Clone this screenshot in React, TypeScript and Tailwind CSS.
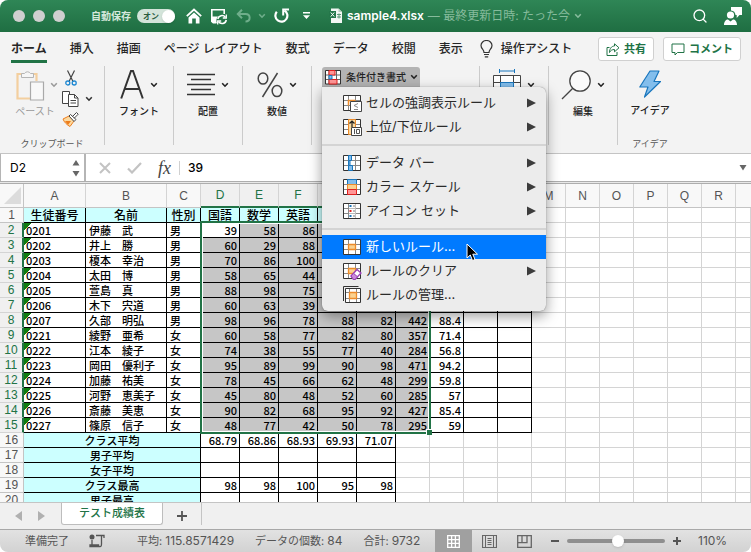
import type { ReactNode } from 'react';
import clsx from 'clsx';
import { Search } from 'lucide-react';

type Student = {
  id: string;
  name: string;
  sex: string;
  scores: string[];
};

const COLUMNS = 'ABCDEFGHIJKLMNOPQR'.split('');

const STUDENTS: Student[] = [
  { id: '0201', name: '伊藤　武', sex: '男', scores: ['39', '58', '86'] },
  { id: '0202', name: '井上　勝', sex: '男', scores: ['60', '29', '88'] },
  { id: '0203', name: '榎本　幸治', sex: '男', scores: ['70', '86', '100'] },
  { id: '0204', name: '太田　博', sex: '男', scores: ['58', '65', '44'] },
  { id: '0205', name: '萱島　真', sex: '男', scores: ['88', '98', '75'] },
  { id: '0206', name: '木下　宍道', sex: '男', scores: ['60', '63', '39'] },
  { id: '0207', name: '久部　明弘', sex: '男', scores: ['98', '96', '78', '88', '82', '442', '88.4'] },
  { id: '0221', name: '綾野　亜希', sex: '女', scores: ['60', '58', '77', '82', '80', '357', '71.4'] },
  { id: '0222', name: '江本　綾子', sex: '女', scores: ['74', '38', '55', '77', '40', '284', '56.8'] },
  { id: '0223', name: '岡田　優利子', sex: '女', scores: ['95', '89', '99', '90', '98', '471', '94.2'] },
  { id: '0224', name: '加藤　祐美', sex: '女', scores: ['78', '45', '66', '62', '48', '299', '59.8'] },
  { id: '0225', name: '河野　恵美子', sex: '女', scores: ['45', '80', '48', '52', '60', '285', '57'] },
  { id: '0226', name: '斎藤　美恵', sex: '女', scores: ['90', '82', '68', '95', '92', '427', '85.4'] },
  { id: '0227', name: '篠原　信子', sex: '女', scores: ['48', '77', '42', '50', '78', '295', '59'] },
];

const SUMMARY = [
  { label: 'クラス平均', values: ['68.79', '68.86', '68.93', '69.93', '71.07'] },
  { label: '男子平均', values: ['', '', '', '', ''] },
  { label: '女子平均', values: ['', '', '', '', ''] },
  { label: 'クラス最高', values: ['98', '98', '100', '95', '98'] },
  { label: '男子最高', values: ['', '', '', '', ''] },
];

const TABS = ['ホーム', '挿入', '描画', 'ページ レイアウト', '数式', 'データ', '校閲', '表示'];

function Chevron({ className }: { className?: string }) {
  return (
    <svg width="8" height="6" viewBox="0 0 8 6" fill="none" stroke="currentColor" strokeWidth="1.6" className={className}>
      <path d="M1.2 1.2 4 4.2 6.8 1.2" />
    </svg>
  );
}

function TitleBar() {
  return (
    <header className="flex h-8 shrink-0 items-center bg-linear-to-b from-[#2f8656] to-[#1f6e42] px-[13px] text-white">
      <div className="flex gap-2">
        <span className="size-3 rounded-full bg-[#cfcfcf]" />
        <span className="size-3 rounded-full bg-[#cfcfcf]" />
        <span className="size-3 rounded-full bg-[#cfcfcf]" />
      </div>
      <span className="ml-[26px] text-[10px] font-bold text-[#d5e8dc]">自動保存</span>
      <button type="button" aria-label="自動保存" className="ml-1.5 flex h-3.5 w-[38px] items-center justify-between rounded-full bg-[#d3e4da] pl-1.5 text-[8px] font-bold text-[#2a5c40]">
        オン
        <span className="size-[13px] rounded-full bg-white shadow" />
      </button>
      <button type="button" aria-label="ホーム" className="ml-[11px]">
        <svg width="16" height="16" viewBox="0 0 16 16" fill="none">
          <path d="M.8 8.2 8 1.500l7.200 6.700" stroke="#fff" strokeWidth="1.8" />
          <path d="M2.500 9.500 8 4.500l5.500 5v6H9.800v-5H6.200v5H2.500z" fill="#fff" />
        </svg>
      </button>
      <button type="button" aria-label="保存" className="ml-2">
        <svg width="18" height="17" viewBox="0 0 18 17" fill="none">
          <path d="M14.200 6V1.800H1.800v11.500l1.500 1.400h3.200" stroke="#fff" strokeWidth="1.600" />
          <path d="M1.500 8.500h6.500L6.500 11v4H3.300L1.500 13.300z" fill="#fff" />
          <path d="M7.800 11a4.300 4.300 0 0 1 7.600-1.800M16.300 12a4.300 4.300 0 0 1-7.700 1.800" stroke="#fff" strokeWidth="1.500" />
          <path d="M16.300 6.500v3.500h-3.500M7.700 16.500V13h3.500" stroke="#fff" strokeWidth="1.300" />
        </svg>
      </button>
      <button type="button" aria-label="元に戻す" className="ml-2 flex items-center gap-1.5 text-[#6fae8b]">
        <svg width="16" height="14" viewBox="0 0 16 14" fill="none" stroke="currentColor" strokeWidth="2">
          <path d="M6 .800 1.800 5 6 9.200M2 5h7.500c5.500 0 5.500 7.500 0 7.500" />
        </svg>
        <Chevron />
      </button>
      <button type="button" aria-label="繰り返す" className="ml-2">
        <svg width="16" height="16" viewBox="0 0 16 16" fill="none" stroke="#fff" strokeWidth="2.200">
          <path d="M2.800 3.800a6 6 0 1 0 7.600-1.300" />
          <path d="M15 1.500H9.200v6" strokeWidth="2" />
        </svg>
      </button>
      <button type="button" aria-label="ツールバーのカスタマイズ" className="ml-3">
        <svg width="9" height="8" viewBox="0 0 9 8" fill="#fff">
          <path d="M1 0h7v1.500H1zM1 3.200h7L4.500 7z" />
        </svg>
      </button>
      <svg width="14" height="16" viewBox="0 0 14 16" className="ml-[18px]">
        <path d="M2 .500h7.500l3.500 3.500v11H2z" fill="#f3f7f4" />
        <path d="M9.500.500V4H13" fill="#b5cfc0" />
        <rect y="3" width="7" height="7" fill="#24774a" />
        <path d="m1.800 4.500 3.400 4M5.200 4.500l-3.400 4" stroke="#fff" />
        <path d="M8 6.500h4M8 9h4M10 5.500v5" stroke="#5b9777" />
      </svg>
      <h1 className="ml-1 flex min-w-0 items-center gap-1 text-xs whitespace-nowrap">
        <span className="font-semibold">sample4.xlsx</span>
        <span className="text-[#86bb9c]">— 最終更新日時: たった今</span>
        <Chevron className="text-[#86bb9c]" />
      </h1>
      <button type="button" aria-label="検索" className="ml-auto">
        <Search size={16} strokeWidth={2} />
      </button>
      <button type="button" aria-label="アカウント" className="ml-4 -mr-1">
        <svg width="18" height="18" viewBox="0 0 18 18" fill="#fff">
          <path d="M7 0h11v8h-2.500l-2.800 3V8H11.500A5 5 0 0 0 7 3.500z" />
          <circle cx="6.500" cy="8" r="3.600" />
          <path d="M0 18c0-3.500 2-5.500 4-5.500l2.500 2 2.500-2c2 0 4 2 4 5.500z" />
        </svg>
      </button>
    </header>
  );
}

function TabStrip() {
  return (
    <nav className="flex h-[34px] shrink-0 items-center pr-2.5 pl-[11px] text-xs font-medium whitespace-nowrap text-[#262626]">
      <div className="flex gap-[23px]">
        {TABS.map((tab, i) => (
          <button
            key={tab}
            type="button"
            className={clsx('h-7 border-b-[3px] pt-0.5', i === 0 ? 'border-[#217346] font-bold' : 'border-transparent')}
          >
            {tab}
          </button>
        ))}
      </div>
      <button type="button" className="ml-[17px] flex items-center gap-2">
        <svg width="13" height="18" viewBox="0 0 13 18" fill="none" stroke="#333" strokeWidth="1.200">
          <path d="M4 12.500c0-3-3-3.600-3-7a5.500 5 0 0 1 11 0c0 3.400-3 4-3 7zM4 14.500h5M4.800 16.800h3.400" />
        </svg>
        操作アシスト
      </button>
      <div className="ml-auto flex gap-[9px] font-bold text-[#217346]">
        <button type="button" className="flex h-6 items-center gap-1 rounded-[3px] border border-[#d0d0d0] bg-white px-[7px] text-[11px]">
          <svg width="14" height="13" viewBox="0 0 14 13" fill="none" stroke="currentColor">
            <path d="M3.500 4.500H1v8h10V9M8.500.800l4.500 4-4.500 4v-2.300C6 6.500 4.500 7.500 3.500 9.500c0-4 2-6.400 5-6.500z" />
          </svg>
          共有
        </button>
        <button type="button" className="flex h-6 items-center gap-1 rounded-[3px] border border-[#d0d0d0] bg-white px-[7px] text-[11px]">
          <svg width="14" height="13" viewBox="0 0 14 13" fill="none" stroke="currentColor">
            <path d="M1 1h12v8.500H6.500L4 12V9.500H1z" />
          </svg>
          コメント
        </button>
      </div>
    </nav>
  );
}

function Divider() {
  return <div className="h-[79px] w-px shrink-0 bg-[#cbcbcb]" />;
}

function RibbonGroup({ label, children }: { label: string; children: ReactNode }) {
  return (
    <section className="w-[68px] shrink-0">
      <button type="button" className="flex w-full flex-col items-center text-[10px] font-medium text-[#222]">
        <span className="flex h-[37px] w-full items-center justify-center gap-1.5">
          {children}
          <Chevron />
        </span>
        <span className="leading-4">{label}</span>
      </button>
    </section>
  );
}

// Small 3x3 table that every rule icon is built on
function GridIcon({ children }: { children?: ReactNode }) {
  return (
    <svg width="19" height="18" viewBox="0 0 19 18" fill="none" className="shrink-0">
      <path d="M.5 1.500h17v15H.5z" fill="#fff" />
      <path d="M5.500 1.500v15M12.500 1.500v15M.5 6.500h17M.5 11.500h17" stroke="#888" />
      <path d="M.5 1.500h17v15H.5z" stroke="#333" />
      {children}
    </svg>
  );
}

const MENU: { label: string; arrow?: boolean; active?: boolean; icon: ReactNode }[][] = [
  [
    {
      label: 'セルの強調表示ルール',
      arrow: true,
      icon: (
        <GridIcon>
          <path d="M5.500 11.500v-5h7" stroke="#ed8b2a" strokeWidth="1.500" />
          <path d="M7.500 7.500h11v10h-11z" fill="#fff" stroke="#444" />
          <path d="m15 9.500-4 2 4 2M11 15.500h4" stroke="#888" />
        </GridIcon>
      ),
    },
    {
      label: '上位/下位ルール',
      arrow: true,
      icon: (
        <GridIcon>
          <path d="M5.500 1.500h7v15h-7z" fill="#fbd9a0" stroke="#ed8b2a" />
          <path d="M9 9V3.500M6.500 5.500 9 3l2.500 2.500" stroke="#222" strokeWidth="1.200" />
          <path d="M8.500 9.500h10v8h-10z" fill="#fff" stroke="#444" />
          <path d="M11.500 11v5M13.500 11.500h3v4h-3z" stroke="#555" />
        </GridIcon>
      ),
    },
  ],
  [
    {
      label: 'データ バー',
      arrow: true,
      icon: (
        <GridIcon>
          <path d="M5.500 1.500h3v5h-3zM5.500 11.500h4v5h-4z" fill="#83beec" stroke="#1976bd" />
          <path d="M5.500 6.500H7v5H5.500z" fill="#83beec" stroke="#1976bd" />
        </GridIcon>
      ),
    },
    {
      label: 'カラー スケール',
      arrow: true,
      icon: (
        <GridIcon>
          <path d="M4.500 1.500h9v5h-9z" fill="#83beec" stroke="#1976bd" />
          <path d="M4.500 6.500h9v5h-9z" fill="#fad291" stroke="#ed8b2a" />
          <path d="M4.500 11.500h9v5h-9z" fill="#ff9696" stroke="#e02020" />
        </GridIcon>
      ),
    },
    {
      label: 'アイコン セット',
      arrow: true,
      icon: (
        <GridIcon>
          <path d="M6 2h6.500v14H6z" fill="#fff" />
          <path d="M6 6.500h6.500M6 11.500h6.500" stroke="#bbb" />
          <path d="M6.500 4h2M6.500 14h2" stroke="#1976bd" strokeWidth="2" />
          <path d="M6.500 9h2" stroke="#e02020" strokeWidth="2" />
          <path d="M10 4h2M10 9h2M10 14h2" stroke="#777" />
        </GridIcon>
      ),
    },
  ],
  [
    {
      label: '新しいルール...',
      active: true,
      icon: (
        <GridIcon>
          <path d="M5.500 6.500h7v5h-7z" fill="#fad291" stroke="#ed8b2a" strokeWidth="1.300" />
        </GridIcon>
      ),
    },
    {
      label: 'ルールのクリア',
      arrow: true,
      icon: (
        <GridIcon>
          <path d="M5.500 6.500h7v5h-7z" fill="#fad291" stroke="#ed8b2a" strokeWidth="1.300" />
          <path d="m8 14 6-6.500 4 3.500-6 6.500h-1.500z" fill="#fff" stroke="#9b3fb5" strokeWidth="1.300" />
          <path d="m8 14 2.500-2.700 4 3.500-2.500 2.700h-1.500z" fill="#c98ad8" stroke="#9b3fb5" />
        </GridIcon>
      ),
    },
    {
      label: 'ルールの管理...',
      icon: (
        <svg width="19" height="18" viewBox="0 0 19 18" fill="none" className="shrink-0">
          <path d="M.5 15V.500h15" stroke="#333" />
          <path d="M2.500 2.500h15v14h-15z" fill="#fff" />
          <path d="M6.500 2.500v14M13.500 2.500v14M2.500 6.500h15M2.500 12.500h15" stroke="#888" />
          <path d="M2.500 2.500h15v14h-15z" stroke="#333" />
          <path d="M6.500 6.500h7v6h-7z" fill="#fad291" stroke="#ed8b2a" strokeWidth="1.300" />
        </svg>
      ),
    },
  ],
];

function RuleMenu() {
  return (
    <div role="menu" className="absolute top-full left-0 z-20 w-56 rounded-b-md rounded-tr-md bg-[#ececec] py-1 shadow-[0_5px_14px_rgba(0,0,0,0.4),0_0_1px_rgba(0,0,0,0.5)]">
      {MENU.map((section, i) => (
        <div key={section[0].label}>
          {i > 0 && (
            <div className="flex h-3 items-center">
              <div className="h-0.5 w-full bg-[#d4d4d4]" />
            </div>
          )}
          {section.map(item => (
            <button
              key={item.label}
              type="button"
              role="menuitem"
              className={clsx(
                'relative flex h-6 w-full items-center gap-1 pr-2.5 pl-[21px] text-[13px] whitespace-nowrap',
                item.active ? 'bg-[#007aff] text-white' : 'text-[#2b2b2b]'
              )}
            >
              {item.icon}
              {item.label}
              {item.arrow && (
                <svg width="9" height="10" viewBox="0 0 9 10" fill="#3c3c3c" className="ml-auto">
                  <path d="M0 .500 9 5 0 9.500z" />
                </svg>
              )}
              {item.active && (
                <svg width="13" height="19" viewBox="0 0 13 19" className="absolute top-2 left-36">
                  <path d="M1 1v14l3.300-3 2.200 5.500 2.500-1L6.800 11.200h4.700z" fill="#000" stroke="#fff" />
                </svg>
              )}
            </button>
          ))}
        </div>
      ))}
    </div>
  );
}

function Ribbon() {
  return (
    <div className="flex h-[88px] shrink-0 border-b border-[#c4c4c4]">
      <section className="flex h-full w-[104px] shrink-0 flex-col">
        <div className="flex flex-1 pl-3.5">
          <button type="button" className="flex w-[42px] flex-col text-[10px] text-[#9a9a9a]">
            <span className="flex h-[37px] items-center gap-1 pl-0.5">
              <svg width="30" height="32" viewBox="0 0 30 32" fill="none" className="shrink-0">
                <path d="M7 5H1.500v24.500H14" stroke="#f3cf9f" strokeWidth="2.200" />
                <path d="M15 5h5.500v7" stroke="#f3cf9f" strokeWidth="2.200" />
                <path d="M5.500 8.500v-4h3a3.500 3.500 0 0 1 6 0h3v4z" fill="#f6f6f6" stroke="#b5b5b5" />
                <path d="M14.500 13h13v18h-13z" fill="#f8f8f8" stroke="#a9a9a9" strokeWidth="1.200" />
              </svg>
              <Chevron className="shrink-0" />
            </span>
            <span className="leading-4 whitespace-nowrap">ペースト</span>
          </button>
          <div className="flex flex-col items-start gap-1 pt-1 pl-1.5">
            <button type="button" aria-label="切り取り" className="pl-[3px]">
              <svg width="12" height="16" viewBox="0 0 12 16" fill="none">
                <path d="m2.500.500 5.500 11M9.500.500l-5.500 11" stroke="#444" strokeWidth="1.200" />
                <circle cx="2.800" cy="13" r="2" stroke="#1e88d2" strokeWidth="1.300" />
                <circle cx="9.200" cy="13" r="2" stroke="#1e88d2" strokeWidth="1.300" />
              </svg>
            </button>
            <button type="button" aria-label="コピー" className="flex items-center gap-1.5 text-[#333]">
              <svg width="17" height="18" viewBox="0 0 17 18" fill="#fff" stroke="#444">
                <path d="M.5 1.500h7v12h-7z" />
                <path d="M6.500 4.500h6l3.500 3.500v8.500H6.500z" />
                <path d="M12.500 4.500V8H16M8.500 10.500h5.500M8.500 13h5.500" fill="none" />
              </svg>
              <Chevron />
            </button>
            <button type="button" aria-label="書式のコピー">
              <svg width="17" height="15" viewBox="0 0 17 15" fill="none">
                <path d="m1 7 6-3 5 5-4 5.500C5 13 2 10 1 7z" fill="#fbd9a0" stroke="#ed7d1c" />
                <path d="m3 9 6 0-3 4z" fill="#ed7d1c" />
                <path d="m7 4 1.500-1.500 5.500 5L12 9.500zM10.500 4.500l4-4 1.700 1.700-4 4" fill="#fff" stroke="#444" />
              </svg>
            </button>
          </div>
        </div>
        <span className="h-[17px] text-center text-[9px] leading-4 text-[#555]">クリップボード</span>
      </section>
      <Divider />
      <RibbonGroup label="フォント">
        <svg width="24" height="29" viewBox="0 0 24 29" fill="none" stroke="#333" strokeWidth="2">
          <path d="M1.200 28.500 11 1h2l9.800 27.500M4.800 19h14.400" />
        </svg>
      </RibbonGroup>
      <Divider />
      <RibbonGroup label="配置">
        <svg width="28" height="24" viewBox="0 0 28 24" stroke="#333" strokeWidth="1.300">
          <path d="M0 1.500h28M4 6.500h20M0 11.500h28M4 16.500h20M0 21.500h28" />
        </svg>
      </RibbonGroup>
      <Divider />
      <RibbonGroup label="数値">
        <svg width="26" height="26" viewBox="0 0 26 26" fill="none" stroke="#444" strokeWidth="1.500">
          <ellipse cx="6" cy="6.500" rx="4.800" ry="5.500" />
          <ellipse cx="20" cy="19" rx="4.800" ry="5.500" />
          <path d="M20.500 1 5.500 25" />
        </svg>
      </RibbonGroup>
      <Divider />
      <section className="w-[167px] shrink-0 pt-px pl-2.5">
        <div className="relative w-fit">
          <button
            type="button"
            aria-haspopup="menu"
            aria-expanded="true"
            className="flex h-5 w-[98px] items-center gap-1 rounded-t-[3px] bg-[#b4b4b4] pl-[3px] text-[10px] font-medium whitespace-nowrap text-[#222]"
          >
            <svg width="17" height="15" viewBox="0 0 17 15" fill="none" className="shrink-0">
              <path d="M.5.500h15v13.500H.5z" fill="#fff" />
              <path d="M4 .500V14M11.500.500V14M.5 5h15M.5 9.500h15" stroke="#666" />
              <path d="M.5.500h15v13.500H.5z" stroke="#333" />
              <path d="M4 .500h6V5H4zM4 9.500h8V14H4z" fill="#ff9696" stroke="#e02020" />
              <path d="M4 5.500h3v3.500H4z" fill="#83beec" stroke="#1976bd" />
            </svg>
            条件付き書式
            <Chevron className="mr-1 ml-auto shrink-0" />
          </button>
          <RuleMenu />
        </div>
      </section>
      <Divider />
      <section className="w-[68px] shrink-0">
        <button type="button" aria-label="セル" className="flex h-[37px] w-full items-center justify-center gap-1.5 text-[#222]">
          <svg width="28" height="31" viewBox="0 0 28 31" fill="none">
            <path d="M6.500 0v4M21.500 0v4M6.500 2h15" stroke="#1976bd" />
            <path d="M.5 6.500h27v23H.5z" fill="#fff" stroke="#444" />
            <path d="M7.500 6.500v23M20.500 6.500v23M.5 13.500h27" stroke="#444" />
            <path d="M7.500 13.500h13v9h-13z" fill="#83beec" stroke="#1976bd" />
          </svg>
          <Chevron />
        </button>
      </section>
      <Divider />
      <RibbonGroup label="編集">
        <svg width="30" height="30" viewBox="0 0 30 30" fill="none" stroke="#444" strokeWidth="1.300">
          <circle cx="19" cy="11" r="10.200" fill="#fafafa" />
          <path d="M11.800 18.200 1 29" />
        </svg>
      </RibbonGroup>
      <Divider />
      <section className="flex w-16 shrink-0 flex-col items-center justify-between">
        <button type="button" className="flex flex-col items-center text-[10px] font-medium text-[#222]">
          <span className="flex h-9 items-center">
            <svg width="22" height="28" viewBox="0 0 22 28" fill="#83beec" stroke="#1976bd" strokeWidth="1.200" strokeLinejoin="round">
              <path d="M11 1h9l-5 10.500h6.500L5.500 27l3.500-10H.8z" />
            </svg>
          </span>
          <span className="leading-4">アイデア</span>
        </button>
        <span className="h-[17px] text-[9px] leading-4 text-[#555]">アイデア</span>
      </section>
    </div>
  );
}

function FormulaBar() {
  return (
    <div className="flex h-7 shrink-0 items-center border-b border-[#adadad] bg-white text-xs">
      <div className="flex h-full w-[86px] items-center justify-between border-x border-r-2 border-[#b5b5b5] pr-1 pl-[9px]">
        <input aria-label="名前ボックス" defaultValue="D2" className="w-12 bg-transparent outline-none" />
        <svg width="8" height="18" viewBox="0 0 8 18" fill="#666">
          <path d="m4 1 3.500 5.500h-7zM4 17.500.500 12h7z" />
        </svg>
      </div>
      <div className="flex items-center gap-4 pl-[13px]">
        <button type="button" aria-label="キャンセル">
          <svg width="12" height="12" viewBox="0 0 12 12" stroke="#c3c3c3" strokeWidth="2">
            <path d="m1 1 10 10M11 1 1 11" />
          </svg>
        </button>
        <button type="button" aria-label="入力">
          <svg width="15" height="12" viewBox="0 0 15 12" fill="none" stroke="#c3c3c3" strokeWidth="2.200">
            <path d="m1 6.500 4 4L14 1" />
          </svg>
        </button>
        <button type="button" aria-label="関数の挿入" className="font-['Liberation_Serif',serif] text-lg leading-5 italic text-[#444]">
          fx
        </button>
      </div>
      <div className="ml-2 h-3.5 w-px bg-[#d0d0d0]" />
      <input aria-label="数式バー" defaultValue="39" className="ml-2 min-w-0 flex-1 bg-transparent font-medium outline-none" />
      <svg width="8" height="6" viewBox="0 0 8 6" fill="#666" className="mr-1">
        <path d="M.5 0h7L4 5.500z" />
      </svg>
    </div>
  );
}

function RowHead({ n, selected }: { n: number; selected?: boolean }) {
  return (
    <th
      scope="row"
      className={clsx(
        "h-[15px] border-b p-0 text-center font-['Liberation_Sans',sans-serif] text-xs leading-[14px] font-normal",
        selected
          ? 'border-r-2 border-r-[#217346] border-b-[#d4d4d4] bg-[#f0f0f0] text-[#217346]'
          : 'border-r border-[#c4c4c4] bg-[#f8f8f8] text-[#555]'
      )}
    >
      {n}
    </th>
  );
}

const BOXED = 'h-[15px] border-r border-b border-black p-0 leading-[14px] whitespace-nowrap';
const PLAIN = 'h-[15px] border-r border-b border-[#d4d4d4] p-0';

function EmptyCells({ count }: { count: number }) {
  return Array.from({ length: count }, (_, i) => <td key={i} className={PLAIN} />);
}

function Sheet() {
  return (
    <div className="relative min-h-0 flex-1 overflow-hidden border-t border-[#adadad] bg-white font-['Noto_Sans_CJK_JP',sans-serif] text-[11px] font-medium text-black">
      <table className="w-full table-fixed border-separate border-spacing-0">
        <colgroup>
          <col className="w-6" />
          <col className="w-[62px]" />
          <col className="w-[81px]" />
          <col className="w-[34px]" />
          {COLUMNS.slice(3, 8).map(c => <col key={c} className="w-[39px]" />)}
          {COLUMNS.slice(8).map(c => <col key={c} className="w-[34px]" />)}
          <col />
        </colgroup>
        <thead className="font-['Liberation_Sans',sans-serif] text-xs">
          <tr className="bg-[#f8f8f8]">
            <th className="h-6 border-r border-b border-[#c4c4c4] p-0">
              <svg width="17" height="17" viewBox="0 0 17 17" fill="#dcdcdc" className="ml-1">
                <path d="M17 0v17H0z" />
              </svg>
            </th>
            {COLUMNS.map((c, i) => {
              const selected = i >= 3 && i <= 8;
              return (
                <th
                  key={c}
                  scope="col"
                  className={clsx(
                    'h-6 border-r border-r-[#d4d4d4] p-0 font-normal',
                    selected ? 'border-b-2 border-b-[#217346] bg-[#f0f0f0] text-[#217346]' : 'border-b border-b-[#c4c4c4] text-[#555]'
                  )}
                >
                  {c}
                </th>
              );
            })}
            <th className="border-b border-[#c4c4c4]" />
          </tr>
        </thead>
        <tbody>
          <tr>
            <RowHead n={1} />
            {['生徒番号', '名前', '性別', '国語', '数学', '英語', '', '', '', '', '', ''].map((label, i) => (
              <td key={i} className={clsx(BOXED, 'bg-[#ccffff] text-center text-xs leading-[14px]')}>{label}</td>
            ))}
            <EmptyCells count={7} />
          </tr>
          {STUDENTS.map((s, row) => (
            <tr key={s.id}>
              <RowHead n={row + 2} selected />
              <td className={clsx(BOXED, 'bg-[linear-gradient(135deg,#107c10_5px,transparent_5px)] pl-0.5')}>{s.id}</td>
              <td className={clsx(BOXED, 'pl-[3px]')}>{s.name}</td>
              <td className={clsx(BOXED, 'pl-[3px]')}>{s.sex}</td>
              {Array.from({ length: 9 }, (_, i) => (
                <td
                  key={i}
                  className={clsx(BOXED, 'pr-0.5 text-right', i < 6 && !(row === 0 && i === 0) && 'bg-[#c6c6c6]')}
                >
                  {s.scores[i]}
                </td>
              ))}
              <EmptyCells count={7} />
            </tr>
          ))}
          {SUMMARY.map((s, row) => (
            <tr key={s.label}>
              <RowHead n={row + 16} />
              <td colSpan={3} className={clsx(BOXED, 'bg-[#ccffff] text-center')}>{s.label}</td>
              {s.values.map((v, i) => (
                <td key={i} className={clsx(BOXED, 'pr-0.5 text-right')}>{v}</td>
              ))}
              <EmptyCells count={11} />
            </tr>
          ))}
        </tbody>
      </table>
      {/* selection frame around D2:I15 */}
      <div className="pointer-events-none absolute top-[37px] left-[200px] h-[213px] w-[231px] border-2 border-[#217346]">
        <div className="h-full border border-white" />
        <span className="absolute -right-[3px] -bottom-[3px] size-[6px] border-t border-l border-white bg-[#217346]" />
      </div>
    </div>
  );
}

function SheetTabs() {
  return (
    <div className="flex h-[27px] shrink-0 items-start border-t border-[#c4c4c4] bg-[#f0f0f0]">
      <div className="flex h-[26px] items-center gap-4 pl-[15px]">
        <button type="button" aria-label="前のシート">
          <svg width="7" height="10" viewBox="0 0 7 10" fill="#b0b0b0"><path d="M7 0v10L0 5z" /></svg>
        </button>
        <button type="button" aria-label="次のシート">
          <svg width="7" height="10" viewBox="0 0 7 10" fill="#b0b0b0"><path d="M0 0v10l7-5z" /></svg>
        </button>
      </div>
      <button type="button" className="ml-4 h-[22px] w-[102px] rounded-b-[3px] border-x border-b border-[#bdbdbd] bg-white text-[11px] font-medium text-[#217346]">
        テスト成績表
      </button>
      <button type="button" aria-label="シートの追加" className="flex h-[26px] w-[38px] items-center justify-center">
        <svg width="10" height="10" viewBox="0 0 10 10" stroke="#555" strokeWidth="1.800"><path d="M5 0v10M0 5h10" /></svg>
      </button>
      <div className="h-[22px] w-px bg-[#c4c4c4]" />
    </div>
  );
}

function Stat({ label, value }: { label: string; value: string }) {
  return (
    <span>
      {label}: <span className="text-xs">{value}</span>
    </span>
  );
}

function StatusBar() {
  return (
    <footer className="flex h-[23px] shrink-0 items-center border-t border-[#a8a8a8] bg-linear-to-b from-[#e2e2e2] to-[#d2d2d2] pl-[25px] text-[11px] whitespace-nowrap text-[#555]">
      <span>準備完了</span>
      <svg width="16" height="14" viewBox="0 0 16 14" fill="none" stroke="#555" strokeWidth="1.300" className="ml-5">
        <circle cx="3" cy="3" r="2.500" fill="#555" stroke="none" />
        <path d="M7 1.500h5.500V10c0 4-3 2.500-3 1H1v1.500h9.500M3 6v5M12.500 1.500H15V4" />
      </svg>
      <div className="ml-8 flex gap-[21px]">
        <Stat label="平均" value="115.8571429" />
        <Stat label="データの個数" value="84" />
        <Stat label="合計" value="9732" />
      </div>
      <div className="ml-auto flex h-full items-center">
        <button type="button" aria-label="標準" className="flex h-full w-[37px] items-center justify-center bg-[#a0a0a0]">
          <svg width="13" height="13" viewBox="0 0 13 13" fill="none" stroke="#fff" strokeWidth="1.300">
            <path d="M.700.700h11.600v11.600H.7zM4.600.700v11.600M8.400.700v11.600M.700 4.600h11.600M.700 8.400h11.600" />
          </svg>
        </button>
        <button type="button" aria-label="ページ レイアウト" className="ml-2.5">
          <svg width="15" height="13" viewBox="0 0 15 13" fill="none" stroke="#666">
            <path d="M.5.500h14v12H.5z" strokeWidth="1.200" />
            <path d="M3.500.500h8v12h-8zM5.500 3.500h4M5.500 5.500h4M5.500 7.500h4M5.500 9.500h4" />
          </svg>
        </button>
        <button type="button" aria-label="改ページ プレビュー" className="ml-5">
          <svg width="15" height="13" viewBox="0 0 15 13" fill="none" stroke="#666" strokeWidth="1.300">
            <path d="M.700.700h13.600v11.600H.7zM5 .700v7h5v-7M.700 7.700H5" />
          </svg>
        </button>
        <button type="button" aria-label="縮小" className="ml-[19px]">
          <svg width="8" height="8" viewBox="0 0 8 8" stroke="#555" strokeWidth="2"><path d="M0 4h8" /></svg>
        </button>
        <input
          type="range"
          aria-label="ズーム"
          min={0}
          max={100}
          defaultValue={52}
          className="ml-2 h-1 w-[98px] appearance-none rounded-full bg-[#8f8f8f] [&::-webkit-slider-thumb]:size-3 [&::-webkit-slider-thumb]:appearance-none [&::-webkit-slider-thumb]:rounded-full [&::-webkit-slider-thumb]:bg-white [&::-webkit-slider-thumb]:shadow"
        />
        <button type="button" aria-label="拡大" className="ml-2">
          <svg width="8" height="8" viewBox="0 0 8 8" stroke="#555" strokeWidth="2"><path d="M0 4h8M4 0v8" /></svg>
        </button>
        <span className="w-[70px] pl-[17px] text-xs">110%</span>
      </div>
    </footer>
  );
}

export default function App() {
  return (
    <div className="flex h-screen flex-col overflow-hidden rounded-lg bg-[#f3f3f3] font-[Inter,'Noto_Sans_CJK_JP',sans-serif]">
      <TitleBar />
      <TabStrip />
      <Ribbon />
      <FormulaBar />
      <div className="h-px shrink-0 bg-[#e8e8e8]" />
      <Sheet />
      <SheetTabs />
      <StatusBar />
    </div>
  );
}
